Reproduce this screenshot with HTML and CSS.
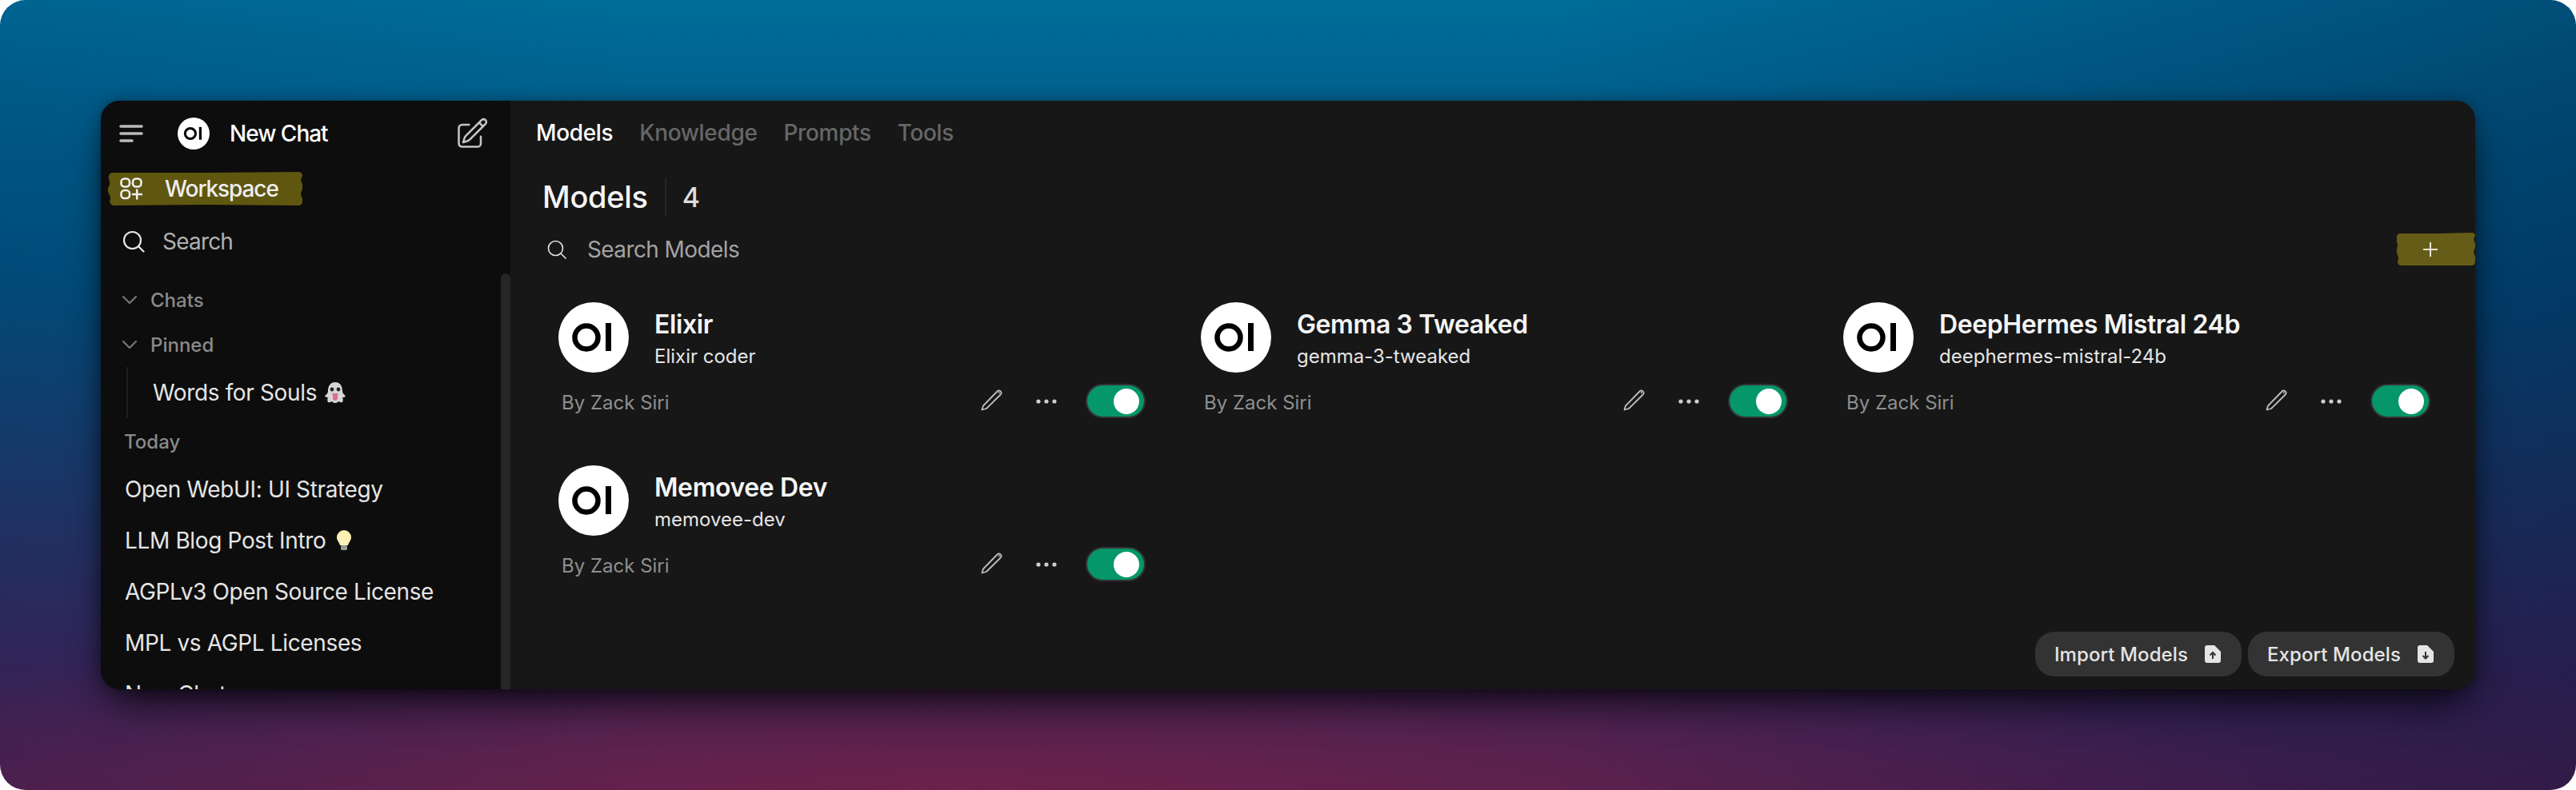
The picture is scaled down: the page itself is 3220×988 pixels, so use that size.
FILE: index.html
```html
<!DOCTYPE html>
<html lang="en">
<head>
  <meta charset="UTF-8" />
  <meta name="viewport" content="width=device-width, initial-scale=1.0"/>
  <title>Models - Open WebUI</title>
  <link rel="stylesheet" href="styles.css">
</head>
<body>
  <svg class="defs" width="0" height="0">
    <symbol id="oi" viewBox="0 0 88 88">
      <circle cx="44" cy="44" r="44" fill="#fff"/>
      <circle cx="35" cy="44" r="14.5" fill="none" stroke="#000" stroke-width="6.5"/>
      <rect x="59" y="26" width="7" height="35" fill="#000"/>
    </symbol>
    <symbol id="pencil" viewBox="0 0 28 28">
      <path d="M1.500 26.500 3 21.500 20.500 3.500a2.900 2.900 0 0 1 4.200 4L7 25Z" fill="none" stroke="#bdbdbd" stroke-width="1.800" stroke-linejoin="round"/>
      <circle cx="22.800" cy="5.200" r="1" fill="#bdbdbd"/>
    </symbol>
    <symbol id="dots" viewBox="0 0 26 6">
      <circle cx="3" cy="3" r="2.600" fill="#cfcfcf"/>
      <circle cx="13" cy="3" r="2.600" fill="#cfcfcf"/>
      <circle cx="23" cy="3" r="2.600" fill="#cfcfcf"/>
    </symbol>
    <symbol id="chevron" viewBox="0 0 18 10">
      <path d="M1 1l8 8 8-8" fill="none" stroke="#777" stroke-width="2.200" stroke-linecap="round" stroke-linejoin="round"/>
    </symbol>
  </svg>

  <div class="window">
    <aside class="sidebar">
      <div class="side-head">
        <svg class="burger" width="30" height="22" viewBox="0 0 30 22">
          <path d="M2 2h26M2 11h26M2 20h14" stroke="#bbb" stroke-width="3.600" stroke-linecap="round"/>
        </svg>
        <svg class="head-logo" width="40" height="40"><use href="#oi"/></svg>
        <span class="head-title">New Chat</span>
        <svg class="head-edit" width="44" height="44" viewBox="0 0 24 24" fill="none" stroke="#c4c4c4" stroke-width="1.400" stroke-linecap="round" stroke-linejoin="round">
          <path d="m16.862 4.487 1.687-1.688a1.875 1.875 0 1 1 2.652 2.652L10.582 16.070a4.500 4.500 0 0 1-1.897 1.130L6 18l.8-2.685a4.500 4.500 0 0 1 1.130-1.897l8.932-8.931Zm0 0L19.500 7.125M18 14v4.750A2.250 2.250 0 0 1 15.750 21H5.250A2.250 2.250 0 0 1 3 18.750V8.250A2.250 2.250 0 0 1 5.250 6H10"/>
        </svg>
      </div>

      <div class="workspace">
        <svg class="tape" viewBox="0 0 243 42" preserveAspectRatio="none">
          <path d="M6 1 120 1 238 0q5 0 5 5-3 4-1 8 3 5 1 9-3 5-1 9 3 5 1 7-1 4-5 4l-118-1L8 42q-5 0-6-5 2-4 0-8-3-5-2-9 3-4 2-8-2-4-1-7 1-4 5-4Z" fill="#5f5610"/>
        </svg>
        <svg class="workspace-icon" width="28" height="28" viewBox="0 0 28 28" fill="none" stroke="#eee" stroke-width="2.600" stroke-linecap="round">
          <rect x="1.500" y="1.500" width="10.500" height="10" rx="4"/>
          <rect x="16" y="1.500" width="10.500" height="10" rx="4"/>
          <rect x="1.500" y="16" width="10.500" height="10" rx="4"/>
          <path d="M21.200 15.500v11M16 21h11"/>
        </svg>
        <span>Workspace</span>
      </div>

      <div class="side-search">
        <svg width="28" height="28" viewBox="0 0 28 28" fill="none" stroke="#e5e5e5" stroke-width="2.200" stroke-linecap="round">
          <circle cx="12.500" cy="12.500" r="10.500"/>
          <path d="M20.500 20.500l6 6"/>
        </svg>
        <span>Search</span>
      </div>

      <div class="folder"><svg width="18" height="10"><use href="#chevron"/></svg><span>Chats</span></div>
      <div class="folder"><svg width="18" height="10"><use href="#chevron"/></svg><span>Pinned</span></div>
      <div class="pinned">
        <span>Words for Souls</span>
        <svg width="28" height="28" viewBox="0 0 28 28">
          <path d="M14 1C7 1 5 7 5 12c0 2-1 4-4 6 1 2 3 2 4 2-1 2-1 4 0 6 2 1 4-1 5-1 1 1 2 2 4 2s3-1 4-2c1 0 3 2 5 1 1-2 1-4 0-6 1 0 3 0 4-2-3-2-4-4-4-6 0-5-2-11-9-11Z" fill="#d6d6d6"/>
          <circle cx="10" cy="10" r="2.400" fill="#222"/>
          <circle cx="18" cy="10" r="2.400" fill="#222"/>
          <path d="M10 15h8l-1 2v4a3 3 0 0 1-6 0v-4Z" fill="#e46a95"/>
        </svg>
      </div>
      <div class="day">Today</div>
      <div class="chat">Open WebUI: UI Strategy</div>
      <div class="chat">LLM Blog Post Intro
        <svg width="18" height="27" viewBox="0 0 18 27">
          <path d="M9 0a9 9 0 0 0-9 9c0 4 3 6 4 10h10c1-4 4-6 4-10a9 9 0 0 0-9-9Z" fill="#fdf0b4"/>
          <rect x="5" y="19" width="8" height="6" rx="1.500" fill="#9a9a9a"/>
        </svg>
      </div>
      <div class="chat">AGPLv3 Open Source License</div>
      <div class="chat">MPL vs AGPL Licenses</div>
      <div class="chat">New Chat</div>
      <div class="scrollbar"></div>
    </aside>

    <main class="main">
      <nav class="tabs">
        <span class="tab active">Models</span>
        <span class="tab">Knowledge</span>
        <span class="tab">Prompts</span>
        <span class="tab">Tools</span>
      </nav>

      <div class="title-row">
        <h1>Models</h1>
        <div class="title-sep"></div>
        <span class="count">4</span>
      </div>

      <div class="search-row">
        <svg width="24" height="24" viewBox="0 0 24 24" fill="none" stroke="#ddd" stroke-width="1.700" stroke-linecap="round">
          <circle cx="10.500" cy="10.500" r="9"/>
          <path d="M17.500 17.500l5.500 5.500"/>
        </svg>
        <span class="search-text">Search Models</span>
        <div class="add">
          <svg class="tape" viewBox="0 0 98 42" preserveAspectRatio="none">
            <path d="M5 1 50 1 93 0q5 0 5 4-3 3-1 7 2 4 1 8-3 4-1 8 2 4 1 9 0 5-5 5L50 41 6 41q-5 0-5-5 2-4 0-8-2-4-1-8 2-4 0-8-1-4 0-8 1-3 5-3Z" fill="#655c17"/>
          </svg>
          <svg class="add-plus" width="20" height="20" viewBox="0 0 20 20">
            <path d="M10 1v18M1 10h18" stroke="#e8e6d8" stroke-width="2"/>
          </svg>
        </div>
      </div>

      <div class="grid">
        <div class="card">
          <div class="card-top">
            <svg width="88" height="88"><use href="#oi"/></svg>
            <div class="card-info"><div class="name">Elixir</div><div class="slug">Elixir coder</div></div>
          </div>
          <div class="card-foot">
            <span class="author">By Zack Siri</span>
            <svg class="foot-pencil" width="28" height="28"><use href="#pencil"/></svg>
            <svg class="foot-dots" width="26" height="6"><use href="#dots"/></svg>
            <div class="toggle"><div class="knob"></div></div>
          </div>
        </div>

        <div class="card">
          <div class="card-top">
            <svg width="88" height="88"><use href="#oi"/></svg>
            <div class="card-info"><div class="name">Gemma 3 Tweaked</div><div class="slug">gemma-3-tweaked</div></div>
          </div>
          <div class="card-foot">
            <span class="author">By Zack Siri</span>
            <svg class="foot-pencil" width="28" height="28"><use href="#pencil"/></svg>
            <svg class="foot-dots" width="26" height="6"><use href="#dots"/></svg>
            <div class="toggle"><div class="knob"></div></div>
          </div>
        </div>

        <div class="card">
          <div class="card-top">
            <svg width="88" height="88"><use href="#oi"/></svg>
            <div class="card-info"><div class="name">DeepHermes Mistral 24b</div><div class="slug">deephermes-mistral-24b</div></div>
          </div>
          <div class="card-foot">
            <span class="author">By Zack Siri</span>
            <svg class="foot-pencil" width="28" height="28"><use href="#pencil"/></svg>
            <svg class="foot-dots" width="26" height="6"><use href="#dots"/></svg>
            <div class="toggle"><div class="knob"></div></div>
          </div>
        </div>

        <div class="card">
          <div class="card-top">
            <svg width="88" height="88"><use href="#oi"/></svg>
            <div class="card-info"><div class="name">Memovee Dev</div><div class="slug">memovee-dev</div></div>
          </div>
          <div class="card-foot">
            <span class="author">By Zack Siri</span>
            <svg class="foot-pencil" width="28" height="28"><use href="#pencil"/></svg>
            <svg class="foot-dots" width="26" height="6"><use href="#dots"/></svg>
            <div class="toggle"><div class="knob"></div></div>
          </div>
        </div>
      </div>

      <div class="actions">
        <button class="action">Import Models
          <svg width="20" height="22" viewBox="0 0 20 22">
            <path d="M3 0h9l8 8v11a3 3 0 0 1-3 3H3a3 3 0 0 1-3-3V3a3 3 0 0 1 3-3Z" fill="#e5e5e5"/>
            <path d="M10 17v-7M6.500 12.500 10 9l3.500 3.500" fill="none" stroke="#333" stroke-width="2"/>
          </svg>
        </button>
        <button class="action">Export Models
          <svg width="20" height="22" viewBox="0 0 20 22">
            <path d="M3 0h9l8 8v11a3 3 0 0 1-3 3H3a3 3 0 0 1-3-3V3a3 3 0 0 1 3-3Z" fill="#e5e5e5"/>
            <path d="M10 8v8M6.500 13 10 16.500 13.500 13" fill="none" stroke="#333" stroke-width="2"/>
          </svg>
        </button>
      </div>
    </main>
  </div>
</body>
</html>
```

FILE: styles.css
```css
* {
  box-sizing: border-box;
}

html {
  background-color: #ffffff;
}

body {
  margin: 0;
  width: 3220px;
  height: 988px;
  padding: 126px;
  border-radius: 32px;
  overflow: hidden;
  font-family: Inter, "Liberation Sans", sans-serif;
  background:
    linear-gradient(90deg, rgba(0, 20, 60, 0.1) 0%, rgba(0, 20, 60, 0) 25%, rgba(0, 15, 50, 0) 60%, rgba(0, 15, 50, 0.32) 100%),
    radial-gradient(ellipse 1700px 210px at 1200px 988px, rgba(122, 34, 70, 0.7) 0%, rgba(122, 34, 70, 0) 100%),
    linear-gradient(180deg, #006d9a 0%, #00608d 13%, #00507f 35%, #1b3a6b 60%, #38255a 85%, #4a2052 100%);
}

.defs {
  position: absolute;
}

.window {
  display: flex;
  width: 2968px;
  height: 736px;
  border-radius: 24px;
  overflow: hidden;
  background-color: #171717;
  box-shadow: 0 25px 50px -12px rgba(0, 0, 0, 0.85), 0 0 16px rgba(0, 0, 0, 0.3);
}

/* sidebar */
.sidebar {
  position: relative;
  flex: 0 0 512px;
  overflow: hidden;
  background-color: #0d0d0d;
}

.scrollbar {
  position: absolute;
  top: 216px;
  right: 0;
  bottom: 0;
  width: 12px;
  border-radius: 6px 6px 0 0;
  background-color: #262626;
}

.side-head {
  display: flex;
  align-items: center;
  height: 82px;
  padding: 0 26px 0 23px;
}

.head-logo {
  margin-left: 43px;
}

.head-title {
  margin-left: 25px;
  font-size: 28px;
  font-weight: 500;
  letter-spacing: -1px;
  color: #ffffff;
}

.head-edit {
  margin-left: auto;
}

.workspace {
  position: relative;
  display: flex;
  align-items: center;
  gap: 28px;
  width: 243px;
  height: 42px;
  margin: 7px 0 0 9px;
  padding-left: 15px;
  font-size: 28px;
  font-weight: 500;
  letter-spacing: -1.1px;
  color: #eeeeee;
}

.tape {
  position: absolute;
  top: 0;
  left: 0;
  width: 100%;
  height: 100%;
}

.workspace-icon,
.workspace span {
  position: relative;
}

.side-search {
  display: flex;
  align-items: center;
  gap: 22px;
  height: 64px;
  margin-top: 13px;
  padding-left: 27px;
  font-size: 28px;
  letter-spacing: -0.8px;
  color: #b0b0b0;
}

.folder {
  display: flex;
  align-items: center;
  gap: 17px;
  height: 56px;
  padding-left: 27px;
  font-size: 24px;
  font-weight: 500;
  color: #8a8a8a;
}

.folder:nth-of-type(4) {
  margin-top: 13px;
}

.pinned {
  display: flex;
  align-items: center;
  gap: 9px;
  height: 64px;
  margin-left: 32px;
  padding-left: 31px;
  border-left: 2px solid #1f1f1f;
  font-size: 28px;
  letter-spacing: -0.36px;
  color: #e5e5e5;
}

.day {
  display: flex;
  align-items: center;
  height: 40px;
  margin-top: 9px;
  padding-left: 29px;
  font-size: 24px;
  font-weight: 500;
  color: #8a8a8a;
}

.day + .chat {
  margin-top: 8px;
}

.chat {
  display: flex;
  align-items: center;
  gap: 14px;
  height: 64px;
  padding-left: 30px;
  font-size: 28px;
  letter-spacing: -0.36px;
  color: #e5e5e5;
}

/* main */
.main {
  display: flex;
  flex-direction: column;
  flex: 1;
  min-width: 0;
}

.tabs {
  display: flex;
  align-items: center;
  gap: 33px;
  height: 80px;
  padding-left: 32px;
  font-size: 28px;
  font-weight: 500;
  letter-spacing: -0.35px;
}

.tab {
  color: #666666;
}

.tab.active {
  color: #ffffff;
}

.title-row {
  display: flex;
  align-items: center;
  height: 56px;
  margin-top: 12px;
  padding-left: 40px;
}

h1 {
  margin: 0;
  font-size: 38px;
  font-weight: 500;
  letter-spacing: -0.3px;
  color: #f5f5f5;
}

.title-sep {
  width: 2px;
  height: 48px;
  margin: 0 20px 0 21px;
  background-color: #262626;
}

.count {
  font-size: 34px;
  font-weight: 500;
  color: #dddddd;
}

.search-row {
  display: flex;
  align-items: center;
  height: 44px;
  margin-top: 16px;
  padding-left: 46px;
  font-size: 28px;
  letter-spacing: -0.6px;
  color: #a3a3a3;
}

.search-text {
  margin-left: 26px;
}

.add {
  position: relative;
  display: flex;
  align-items: center;
  justify-content: center;
  width: 98px;
  height: 42px;
  margin-left: auto;
  padding-right: 14px;
}

.add-plus {
  position: relative;
}

.grid {
  display: grid;
  grid-template-columns: repeat(3, 803px);
  margin-top: 24px;
  padding-left: 40px;
}

.card {
  height: 204px;
  padding: 20px 49px 0 20px;
}

.card-top {
  display: flex;
  align-items: center;
  gap: 32px;
}

.card-info {
  margin-top: 2px;
}

.name {
  font-size: 32px;
  font-weight: 600;
  letter-spacing: -0.4px;
  color: #f5f5f5;
}

.slug {
  margin-top: 6px;
  font-size: 24px;
  color: #e5e5e5;
}

.card-foot {
  display: flex;
  align-items: center;
  height: 43px;
  margin-top: 14px;
  padding-left: 4px;
  font-size: 24px;
}

.author {
  margin-top: 4px;
  color: #8f8f8f;
}

.foot-pencil {
  margin: -3px 0 0 auto;
}

.foot-dots {
  margin-left: 41px;
}

.toggle {
  display: flex;
  align-items: center;
  justify-content: flex-end;
  width: 75px;
  height: 43px;
  margin-left: 36px;
  padding-right: 6px;
  border: 2px solid #333333;
  border-radius: 22px;
  background-color: #059669;
}

.knob {
  width: 32px;
  height: 32px;
  border-radius: 50%;
  background-color: #ffffff;
}

.actions {
  display: flex;
  justify-content: flex-end;
  gap: 8px;
  margin-top: auto;
  padding: 0 26px 16px 0;
}

.action {
  display: flex;
  align-items: center;
  gap: 21px;
  height: 56px;
  padding: 0 26px 0 24px;
  border: none;
  border-radius: 24px;
  background-color: #333333;
  font-family: inherit;
  font-size: 24px;
  font-weight: 500;
  letter-spacing: 0.1px;
  color: #e5e5e5;
}
```
